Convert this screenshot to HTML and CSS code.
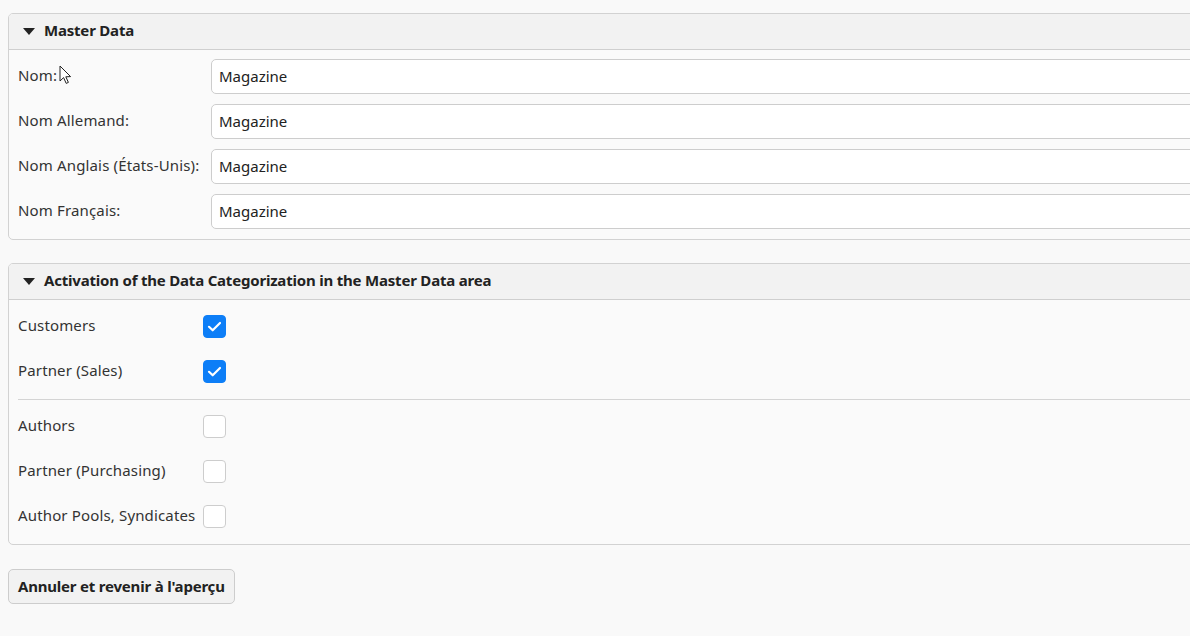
FILE: index.html
```html
<!DOCTYPE html>
<html lang="fr">
<head>
    <meta charset="UTF-8">
    <title>Master Data</title>
    <link rel="stylesheet" href="styles.css">
</head>
<body>
<div class="page">
    <section class="panel">
        <header class="panel-head"><span class="caret"></span>Master Data</header>
        <div class="panel-body form-grid names">
            <label class="field-label" for="name">Nom:</label>
            <input class="text-input" id="name" type="text" value="Magazine">
            <label class="field-label" for="name-de">Nom Allemand:</label>
            <input class="text-input" id="name-de" type="text" value="Magazine">
            <label class="field-label" for="name-us">Nom Anglais (États-Unis):</label>
            <input class="text-input" id="name-us" type="text" value="Magazine">
            <label class="field-label" for="name-fr">Nom Français:</label>
            <input class="text-input" id="name-fr" type="text" value="Magazine">
        </div>
    </section>

    <section class="panel">
        <header class="panel-head"><span class="caret"></span>Activation of the Data Categorization in the Master Data area</header>
        <div class="panel-body">
            <div class="form-grid checks">
                <label class="field-label" for="cat-customers">Customers</label>
                <span class="check-cell"><input class="check" id="cat-customers" type="checkbox" checked></span>
                <label class="field-label" for="cat-partner-sales">Partner (Sales)</label>
                <span class="check-cell"><input class="check" id="cat-partner-sales" type="checkbox" checked></span>
            </div>
            <hr class="divider">
            <div class="form-grid checks">
                <label class="field-label" for="cat-authors">Authors</label>
                <span class="check-cell"><input class="check" id="cat-authors" type="checkbox"></span>
                <label class="field-label" for="cat-partner-purch">Partner (Purchasing)</label>
                <span class="check-cell"><input class="check" id="cat-partner-purch" type="checkbox"></span>
                <label class="field-label" for="cat-pools">Author Pools, Syndicates</label>
                <span class="check-cell"><input class="check" id="cat-pools" type="checkbox"></span>
            </div>
        </div>
    </section>

    <div class="actions">
        <button class="btn" type="button">Annuler et revenir à l'aperçu</button>
    </div>
</div>

<!-- mouse pointer -->
<svg class="pointer" width="14" height="20" viewBox="0 0 14 20">
    <path d="M1 1 L1 16 L4.6 12.6 L7.2 18.4 L9.4 17.4 L6.8 11.8 L11.6 11.6 Z" fill="#fff" stroke="#222" stroke-width="1" stroke-linejoin="round"/>
</svg>
</body>
</html>
```

FILE: styles.css
```css
html, body {
    margin: 0;
    background: #f9f9f9;
    overflow: hidden;
}

body {
    font-family: "Noto Sans", Lato, sans-serif;
    font-size: 15px;
    letter-spacing: 0.15px;
    color: #2b2b33;
    position: relative;
    height: 636px;
}

.page {
    padding: 13px 0 0 8px;
    width: 1260px;
    display: flex;
    flex-direction: column;
    gap: 23px;
}

.panel {
    border: 1px solid #d2d2d2;
    border-radius: 5px;
    background: #fafafa;
    overflow: hidden;
}

.panel-head {
    height: 36px;
    box-sizing: border-box;
    padding: 0 0 4px 14px;
    display: flex;
    align-items: center;
    background: #f2f2f2;
    border-bottom: 1px solid #cfcfcf;
    font-weight: 700;
    letter-spacing: -0.2px;
    color: #222;
}

.caret {
    width: 0;
    height: 0;
    border-left: 6px solid transparent;
    border-right: 6px solid transparent;
    border-top: 7px solid #222;
    margin-right: 9px;
    margin-top: 4px;
}

.panel-body {
    padding: 9px 0 10px 9px;
}

.form-grid {
    display: grid;
    grid-template-columns: 193px 1fr;
    row-gap: 10px;
    align-items: center;
}

.form-grid.checks {
    grid-template-columns: 185px 1fr;
}

.field-label {
    color: #333;
    padding-bottom: 3px;
}

.text-input {
    height: 35px;
    box-sizing: border-box;
    border: 1px solid #cdcdcd;
    border-radius: 5px;
    background: #fff;
    padding: 0 7px 2px;
    font: inherit;
    color: #222;
    width: 100%;
}

.check-cell {
    height: 35px;
    display: flex;
    align-items: center;
}

.check {
    appearance: none;
    margin: 0;
    width: 23px;
    height: 23px;
    border: 1px solid #cdcdcd;
    border-radius: 4px;
    background: #fff;
}

.check:checked {
    border-color: #0d7ef7;
    background: #0d7ef7 url("data:image/svg+xml,%3Csvg xmlns='http://www.w3.org/2000/svg' viewBox='0 0 23 23'%3E%3Cpath d='M6 11.8 L9.7 15.3 L17 8' fill='none' stroke='%23fff' stroke-width='2.2' stroke-linecap='round' stroke-linejoin='round'/%3E%3C/svg%3E") center / 23px 23px no-repeat;
}

.divider {
    border: 0;
    border-top: 1px solid #d4d4d4;
    margin: 10px 0 9px;
}

.actions {
    margin-top: 1px;
}

.btn {
    height: 35px;
    padding: 0 9px 2px;
    border: 1px solid #cdcdcd;
    border-radius: 5px;
    background: #f2f2f2;
    font: inherit;
    font-weight: 700;
    letter-spacing: -0.2px;
    color: #222;
}

.pointer {
    position: absolute;
    left: 59px;
    top: 65px;
}
```
